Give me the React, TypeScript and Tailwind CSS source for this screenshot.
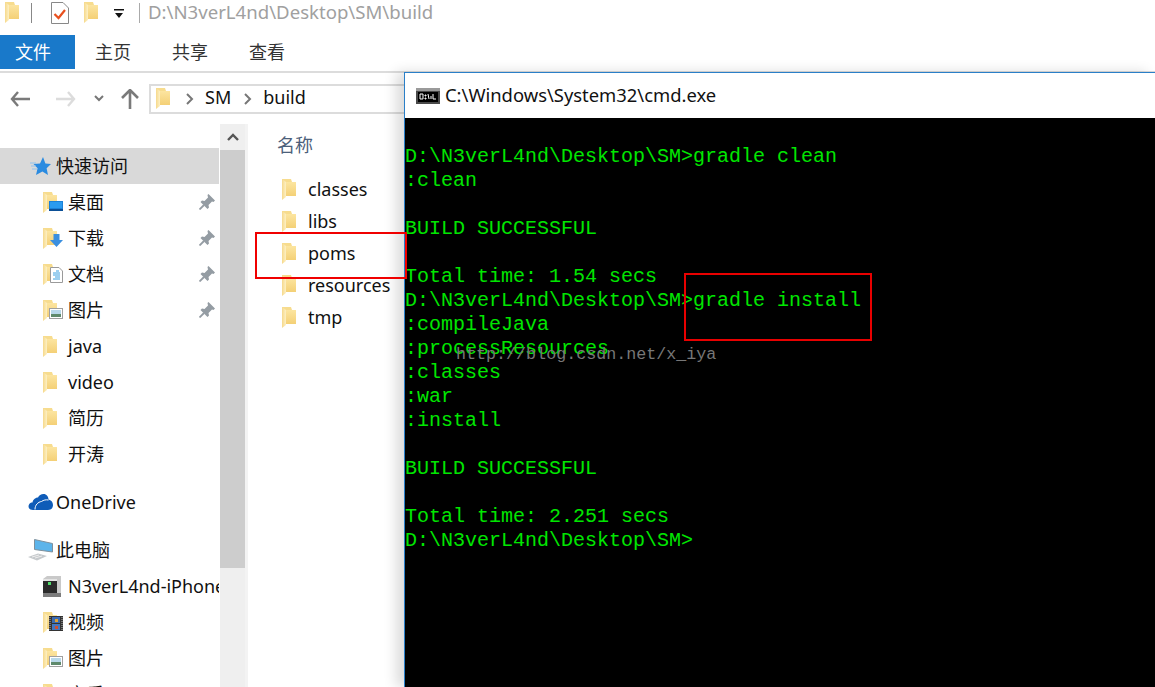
import React from "react";

const uiFont = { fontFamily: '"Noto Sans", "Noto Sans CJK SC", sans-serif' };

const Folder = ({ className = "" }: { className?: string }) => (
	<svg width="14" height="21" viewBox="0 0 14 21" className={`flex-none ${className}`}>
		<defs>
			<linearGradient id="fold" x1="0" y1="0" x2="0" y2="1">
				<stop offset="0" stopColor="#fce5a0" />
				<stop offset="1" stopColor="#f4d076" />
			</linearGradient>
			<linearGradient id="flap" x1="0" y1="0" x2="1" y2="0">
				<stop offset="0" stopColor="#f6d98c" />
				<stop offset="1" stopColor="#fdf0c4" />
			</linearGradient>
		</defs>
		<path d="M0 0H9L10 3H14V17H0Z" fill="#f7dc8e" />
		<path d="M4 3H14V17H4Z" fill="url(#fold)" />
		<path d="M0 0L4 3V18L0 21Z" fill="url(#flap)" />
	</svg>
);

const Pin = () => (
	<svg width="16" height="16" viewBox="0 0 16 16">
		<path d="M9.5 0L16 6.5L14.5 8L13 7.5L9.5 11L10 13.5L8.5 15L1.5 8L3 6.5L5.5 7L9 3.5L8.5 1Z" fill="#949ca3" />
		<path d="M5 11L.5 15.5" stroke="#949ca3" strokeWidth="1.8" />
	</svg>
);

const Overlay = ({ kind }: { kind: string }) => {
	if (kind === "desktop")
		return (
			<svg width="14" height="11" viewBox="0 0 14 11" className="absolute left-[6px] bottom-[1px]">
				<rect width="14" height="10" fill="#1b82d8" />
				<rect y="8" width="14" height="2" fill="#0b4f96" />
				<rect x="1" y="1" width="12" height="6" fill="#2b9bef" />
			</svg>
		);
	if (kind === "down")
		return (
			<svg width="13" height="14" viewBox="0 0 13 14" className="absolute left-[7px] bottom-[1px]">
				<path d="M3.5 0H9.5V6H13L6.5 13L0 6H3.5Z" fill="#3b8fdf" />
			</svg>
		);
	if (kind === "doc")
		return (
			<svg width="13" height="16" viewBox="0 0 13 16" className="absolute left-[7px] bottom-[2px]">
				<path d="M.5.5H9L12.5 4V15.5H.5Z" fill="#fff" stroke="#9a9a9a" />
				<path d="M6 4H9M3 6H10M3 8H10M5 10H10M3 12H10" stroke="#3aa0e0" />
			</svg>
		);
	if (kind === "pic")
		return (
			<svg width="14" height="11" viewBox="0 0 14 11" className="absolute left-[6px] bottom-[2px]">
				<rect x=".5" y=".5" width="13" height="10" fill="#fff" stroke="#a0a0a0" />
				<rect x="2" y="2" width="10" height="4" fill="#b8d8ea" />
				<rect x="2" y="6" width="10" height="3" fill="#5f8a6c" />
			</svg>
		);
	if (kind === "video")
		return (
			<svg width="14" height="15" viewBox="0 0 14 15" className="absolute left-[6px] bottom-[2px]">
				<rect width="14" height="15" fill="#333" />
				<path d="M1 1V14M13 1V14" stroke="#bbb" strokeDasharray="1 1" />
				<rect x="3" y="1" width="8" height="6" fill="#3c6bb0" />
				<rect x="3" y="8" width="8" height="6" fill="#4477c0" />
				<rect x="6" y="3" width="3" height="3" fill="#e0a030" />
				<rect x="6" y="10" width="3" height="3" fill="#d05030" />
			</svg>
		);
	return null;
};

const NavFolder = ({ kind }: { kind?: string }) => (
	<span className="relative w-[20px] h-[21px] flex-none">
		<Folder />
		{kind && <Overlay kind={kind} />}
	</span>
);

const Row = ({ icon, label, top = false, pin = false }: { icon: React.ReactNode; label: string; top?: boolean; pin?: boolean }) => (
	<div
		className={`h-[36px] flex items-center text-[18px] text-[#111] whitespace-nowrap overflow-hidden ${top ? "pl-[28px]" : "pl-[43px]"}`}
	>
		{icon}
		<span className={top ? "ml-[3px]" : "ml-[5px]"}>{label}</span>
		{pin && (
			<span className="ml-auto mr-[4px] flex">
				<Pin />
			</span>
		)}
	</div>
);

const Sidebar = () => (
	<div className="w-[219px] flex-none">
		<div className="h-[36px] flex items-center bg-[#d9d9d9] pl-[30px] text-[18px] text-[#111]">
			<svg width="21" height="19" viewBox="0 0 21 19">
				<path d="M13 0L15.4 6.4L21 7L16.6 11.2L18 18L12.4 14.6L6 18L7.6 11.2L3.5 7L10 6.4Z" fill="#2b8be0" />
				<path d="M0 6H6M1 9H6M2 12H7" stroke="#8fc2ee" />
			</svg>
			<span className="ml-[5px]">快速访问</span>
		</div>
		<Row icon={<NavFolder kind="desktop" />} label="桌面" pin />
		<Row icon={<NavFolder kind="down" />} label="下载" pin />
		<Row icon={<NavFolder kind="doc" />} label="文档" pin />
		<Row icon={<NavFolder kind="pic" />} label="图片" pin />
		<Row icon={<NavFolder />} label="java" />
		<Row icon={<NavFolder />} label="video" />
		<Row icon={<NavFolder />} label="简历" />
		<Row icon={<NavFolder />} label="开涛" />
		<div className="h-[12px]" />
		<Row
			top
			icon={
				<svg width="25" height="16" viewBox="0 0 25 16" className="flex-none">
					<path d="M5 16C1 16 0 13 .8 11C1.5 9 3 8.5 4.5 8.5C5 5 8 3.5 10 3.5C11 1.5 13 0 15.5 0C18.5 0 20.5 2.5 20.5 5.5C23 6 25 8 25 11C25 14 23 16 20 16Z" fill="#0f5cb8" />
					<path d="M7 15.5C7 11 10 8 13.5 7.5C15.5 6 18 5.5 20.5 6" fill="none" stroke="#fff" strokeWidth="1" />
				</svg>
			}
			label="OneDrive"
		/>
		<div className="h-[12px]" />
		<Row
			top
			icon={
				<svg width="25" height="22" viewBox="0 0 25 22" className="flex-none">
					<path d="M6.5 0.5L24.5 4.5V13L6.5 10.5Z" fill="#5cb4ea" stroke="#7f909c" />
					<path d="M0 18L10 14.5L19 17L9 21.5Z" fill="#c5c9cc" />
					<path d="M4 18L11 16M7 19L14 17" stroke="#eee" />
				</svg>
			}
			label="此电脑"
		/>
		<Row
			icon={
				<span className="w-[20px] flex-none flex">
					<svg width="18" height="21" viewBox="0 0 18 21">
						<path d="M0 3L4 0H18V17L14 21H0Z" fill="#c9c9c9" />
						<rect y="3" width="14" height="14" fill="#2b2b2b" />
						<rect x="5" y="6" width="3" height="3" fill="#4fdc6a" />
						<rect y="17" width="18" height="4" fill="#7c7c7c" />
						<path d="M0 3H14V5H0Z" fill="#e4e4e4" />
					</svg>
				</span>
			}
			label="N3verL4nd-iPhone"
		/>
		<Row icon={<NavFolder kind="video" />} label="视频" />
		<Row icon={<NavFolder kind="pic" />} label="图片" />
		<Row icon={<NavFolder />} label="音乐" />
	</div>
);

const Scrollbar = () => (
	<div className="w-[25px] flex-none bg-[#efefef] flex flex-col">
		<div className="h-[26px] flex items-center justify-center">
			<svg width="12" height="8" viewBox="0 0 12 8">
				<path d="M1 7L6 2L11 7" fill="none" stroke="#555" strokeWidth="2.4" />
			</svg>
		</div>
		<div className="h-[418px] bg-[#cdcdcd]" />
	</div>
);

const FileRow = ({ name }: { name: string }) => (
	<div className="h-[32px] flex items-center text-[18px] text-[#111]">
		<Folder />
		<span className="ml-[12px]">{name}</span>
	</div>
);

const lines = [
	"",
	"D:\\N3verL4nd\\Desktop\\SM>gradle clean",
	":clean",
	"",
	"BUILD SUCCESSFUL",
	"",
	"Total time: 1.54 secs",
	"D:\\N3verL4nd\\Desktop\\SM>gradle install",
	":compileJava",
	":processResources",
	":classes",
	":war",
	":install",
	"",
	"BUILD SUCCESSFUL",
	"",
	"Total time: 2.251 secs",
	"D:\\N3verL4nd\\Desktop\\SM>",
];

const CmdWindow = () => (
	<div className="absolute left-[404px] top-[72px] right-0 bottom-0 flex flex-col border-l border-t border-[#2a7fc8] shadow-[-8px_0_12px_rgba(0,0,0,0.14)]">
		<div className="h-[45px] flex-none bg-white flex items-center pl-[11px] text-[18.4px] text-[#111]">
			<svg width="24" height="16" viewBox="0 0 24 16">
				<rect width="24" height="16" fill="#4a4a4a" />
				<rect x="0" y="0" width="24" height="3" fill="#9a9a9a" />
				<rect x="2" y="4" width="20" height="10" fill="#000" />
				<path d="M4 6H7V11H4ZM9 7H10V8H9ZM9 10H10V11H9ZM12 6L13 11M15 8V11M17 6V11M17 11H20" fill="none" stroke="#fff" />
			</svg>
			<span className="ml-[5px] -mt-[1px]">C:\Windows\System32\cmd.exe</span>
		</div>
		<div className="flex-1 bg-black pt-[3px] text-[20px] leading-[24px] text-[#00e600] font-['Liberation_Mono',monospace] whitespace-pre">
			{lines.map((l, i) => (
				<div key={i} className="h-[24px]">
					{l}
				</div>
			))}
		</div>
	</div>
);

export default function App() {
	return (
		<div className="relative w-[1155px] h-[687px] overflow-hidden bg-white flex flex-col" style={uiFont}>
			{/* title row */}
			<div className="h-[25px] mb-[10px] flex-none flex items-center text-[18.6px] text-[#a0a0a0]">
				<Folder className="ml-[5px]" />
				<span className="ml-[12px] w-px h-[20px] bg-[#888]" />
				<svg width="18" height="22" viewBox="0 0 18 22" className="ml-[19px]">
					<path d="M.5.5H12L17.5 6V21.5H.5Z" fill="#fff" stroke="#888" />
					<path d="M3.5 12L7.5 16L14 8" fill="none" stroke="#e8501e" strokeWidth="2.2" />
				</svg>
				<Folder className="ml-[15px]" />
				<svg width="10" height="12" viewBox="0 0 10 12" className="ml-[16px] mt-[4px]">
					<path d="M0 0H10V1.4H0ZM1 4H9L5 9Z" fill="#111" />
				</svg>
				<span className="ml-[15px] w-px h-[20px] bg-[#aaa]" />
				<span className="ml-[8px] -mt-[2px]">D:\N3verL4nd\Desktop\SM\build</span>
			</div>
			{/* ribbon tabs */}
			<div className="h-[38px] flex-none flex text-[18px] text-[#333] border-b-2 border-[#dcdcdc]">
				<div className="w-[75px] h-[34px] bg-[#1979ca] text-white flex items-center pl-[15px]">文件</div>
				<div className="h-[34px] ml-[20px] flex items-center gap-[41px]">
					<span>主页</span>
					<span>共享</span>
					<span>查看</span>
				</div>
			</div>
			{/* nav row */}
			<div className="h-[51px] flex-none flex items-center">
				<svg width="20" height="16" viewBox="0 0 20 16" className="ml-[10px]">
					<path d="M8 1L2 8L8 15M2 8H20" fill="none" stroke="#7a7a7a" strokeWidth="2.4" />
				</svg>
				<svg width="20" height="16" viewBox="0 0 20 16" className="ml-[26px]">
					<path d="M12 1L18 8L12 15M18 8H0" fill="none" stroke="#dcdcdc" strokeWidth="2.4" />
				</svg>
				<svg width="10" height="7" viewBox="0 0 10 7" className="ml-[18px]">
					<path d="M1 1L5 5L9 1" fill="none" stroke="#777" strokeWidth="2" />
				</svg>
				<svg width="18" height="20" viewBox="0 0 18 20" className="ml-[17px]">
					<path d="M1 9L9 1L17 9M9 1V20" fill="none" stroke="#7a7a7a" strokeWidth="2.6" />
				</svg>
				<div className="ml-[10px] h-[30px] flex-1 border-2 border-[#dcdcdc] flex items-center pl-[5px] text-[18px] text-[#111]">
					<Folder />
					<svg width="8" height="12" viewBox="0 0 8 12" className="ml-[16px]">
						<path d="M1 1L6 6L1 11" fill="none" stroke="#777" strokeWidth="2" />
					</svg>
					<span className="ml-[11px] -mt-[2px]">SM</span>
					<svg width="8" height="12" viewBox="0 0 8 12" className="ml-[13px]">
						<path d="M1 1L6 6L1 11" fill="none" stroke="#777" strokeWidth="2" />
					</svg>
					<span className="ml-[11px] -mt-[2px]">build</span>
				</div>
			</div>
			{/* main */}
			<div className="flex-1 flex min-h-0">
				<div className="w-[219px] flex-none pt-[24px] overflow-hidden">
					<Sidebar />
				</div>
				<div className="w-px flex-none" />
				<Scrollbar />
				<div className="w-[3px] flex-none bg-[#f3f3f3]" />
				<div className="flex-1 pl-[29px] pt-[7px]">
					<div className="h-[28px] flex items-center text-[18px] text-[#4c607a]">名称</div>
					<div className="pl-[5px] pt-[14px]">
						{["classes", "libs", "poms", "resources", "tmp"].map((n) => (
							<FileRow key={n} name={n} />
						))}
					</div>
				</div>
			</div>

			<CmdWindow />

			{/* annotation boxes and watermark */}
			<div className="absolute left-[255px] top-[232px] w-[152px] h-[47px] border-2 border-[#f00000]" />
			<div className="absolute left-[684px] top-[273px] w-[188px] h-[68px] border-2 border-[#e80000]" />
			<div className="absolute left-[456px] top-[345px] text-[16.7px] leading-[20px] text-[#777] font-['Liberation_Mono',monospace]">
				http://blog.csdn.net/x_iya
			</div>
		</div>
	);
}
